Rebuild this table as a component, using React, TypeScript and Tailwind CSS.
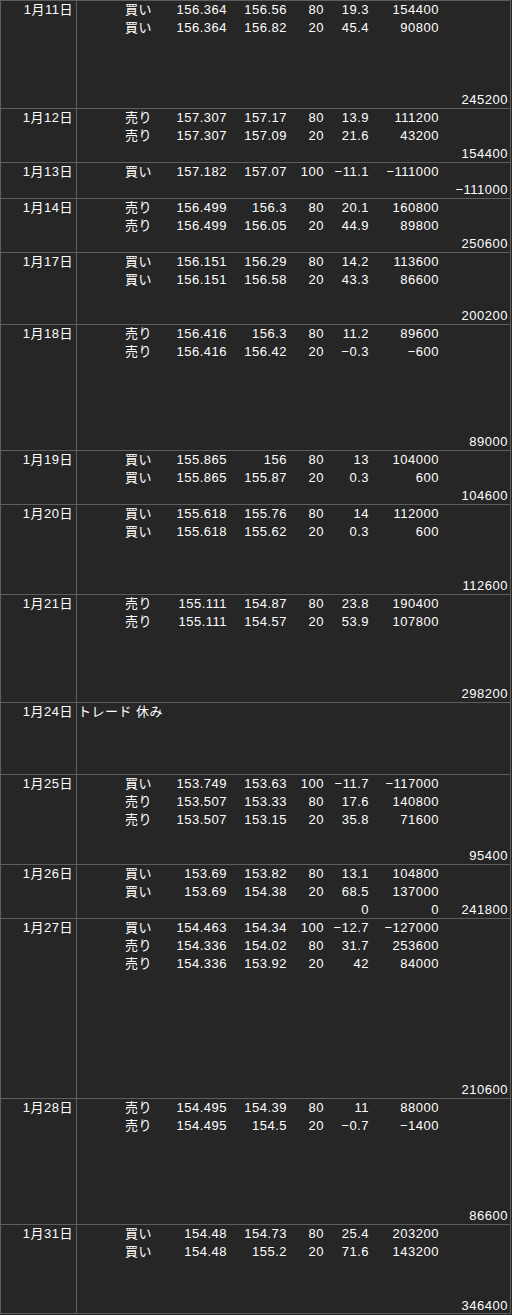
import React from "react";

type Trade = [string, string, string, string, string, string];
type Row = {
  date: string;
  lines: number;
  trades: Trade[];
  total?: string;
  note?: string;
  extra?: [string, string];
};

const M = "\u2212";

const rows: Row[] = [
  { date: "1月11日", lines: 6, trades: [["買い", "156.364", "156.56", "80", "19.3", "154400"], ["買い", "156.364", "156.82", "20", "45.4", "90800"]], total: "245200" },
  { date: "1月12日", lines: 3, trades: [["売り", "157.307", "157.17", "80", "13.9", "111200"], ["売り", "157.307", "157.09", "20", "21.6", "43200"]], total: "154400" },
  { date: "1月13日", lines: 2, trades: [["買い", "157.182", "157.07", "100", M + "11.1", M + "111000"]], total: M + "111000" },
  { date: "1月14日", lines: 3, trades: [["売り", "156.499", "156.3", "80", "20.1", "160800"], ["売り", "156.499", "156.05", "20", "44.9", "89800"]], total: "250600" },
  { date: "1月17日", lines: 4, trades: [["買い", "156.151", "156.29", "80", "14.2", "113600"], ["買い", "156.151", "156.58", "20", "43.3", "86600"]], total: "200200" },
  { date: "1月18日", lines: 7, trades: [["売り", "156.416", "156.3", "80", "11.2", "89600"], ["売り", "156.416", "156.42", "20", M + "0.3", M + "600"]], total: "89000" },
  { date: "1月19日", lines: 3, trades: [["買い", "155.865", "156", "80", "13", "104000"], ["買い", "155.865", "155.87", "20", "0.3", "600"]], total: "104600" },
  { date: "1月20日", lines: 5, trades: [["買い", "155.618", "155.76", "80", "14", "112000"], ["買い", "155.618", "155.62", "20", "0.3", "600"]], total: "112600" },
  { date: "1月21日", lines: 6, trades: [["売り", "155.111", "154.87", "80", "23.8", "190400"], ["売り", "155.111", "154.57", "20", "53.9", "107800"]], total: "298200" },
  { date: "1月24日", lines: 4, trades: [], note: "トレード 休み" },
  { date: "1月25日", lines: 5, trades: [["買い", "153.749", "153.63", "100", M + "11.7", M + "117000"], ["売り", "153.507", "153.33", "80", "17.6", "140800"], ["売り", "153.507", "153.15", "20", "35.8", "71600"]], total: "95400" },
  { date: "1月26日", lines: 3, trades: [["買い", "153.69", "153.82", "80", "13.1", "104800"], ["買い", "153.69", "154.38", "20", "68.5", "137000"]], total: "241800", extra: ["0", "0"] },
  { date: "1月27日", lines: 10, trades: [["買い", "154.463", "154.34", "100", M + "12.7", M + "127000"], ["売り", "154.336", "154.02", "80", "31.7", "253600"], ["売り", "154.336", "153.92", "20", "42", "84000"]], total: "210600" },
  { date: "1月28日", lines: 7, trades: [["売り", "154.495", "154.39", "80", "11", "88000"], ["売り", "154.495", "154.5", "20", M + "0.7", M + "1400"]], total: "86600" },
  { date: "1月31日", lines: 5, trades: [["買い", "154.48", "154.73", "80", "25.4", "203200"], ["買い", "154.48", "155.2", "20", "71.6", "143200"]], total: "346400" },
];

const lineCls =
  "grid grid-cols-[83px_67px_60px_37px_45px_70px_69px] h-[18px] leading-[18px] shrink-0 whitespace-nowrap";

function Line({ cells }: { cells: string[] }) {
  return (
    <div className={lineCls}>
      <div className="pl-[48px] text-left">{cells[0]}</div>
      <div className="text-right">{cells[1]}</div>
      <div className="text-right">{cells[2]}</div>
      <div className="text-right">{cells[3]}</div>
      <div className="text-right">{cells[4]}</div>
      <div className="text-right">{cells[5]}</div>
      <div className="text-right">{cells[6]}</div>
    </div>
  );
}

function TableRow({ row, last }: { row: Row; last: boolean }) {
  const lines: string[][] = [];
  for (let i = 0; i < row.lines; i++) {
    lines.push(["", "", "", "", "", "", ""]);
  }
  row.trades.forEach((t, i) => {
    lines[i] = [...t, ""];
  });
  const lastIdx = row.lines - 1;
  if (row.extra) {
    lines[lastIdx][4] = row.extra[0];
    lines[lastIdx][5] = row.extra[1];
  }
  if (row.total) lines[lastIdx][6] = row.total;

  return (
    <div
      className={`flex border-t border-[#5e5e5e] overflow-hidden ${last ? "border-b" : ""}`}
      style={{ height: row.lines * 18 }}
    >
      <div className="w-[76px] shrink-0 border-r border-[#5e5e5e] text-right pr-[3px] leading-[18px] whitespace-nowrap">
        {row.date}
      </div>
      <div className="flex flex-col min-w-0">
        {row.note ? (
          <div className="h-[18px] leading-[18px] pl-[1px] whitespace-nowrap">{row.note}</div>
        ) : (
          lines.map((l, i) => <Line key={i} cells={l} />)
        )}
      </div>
    </div>
  );
}

export default function App() {
  return (
    <div
      className="w-[512px] h-[1315px] bg-[#262626] text-white text-[13px] tracking-[0.5px]"
      style={{ fontFamily: '"Liberation Sans", "Noto Sans CJK JP", sans-serif' }}
    >
      <div className="w-[511px] border-l border-r border-[#5e5e5e]">
        {rows.map((r, i) => (
          <TableRow key={i} row={r} last={i === rows.length - 1} />
        ))}
      </div>
    </div>
  );
}
